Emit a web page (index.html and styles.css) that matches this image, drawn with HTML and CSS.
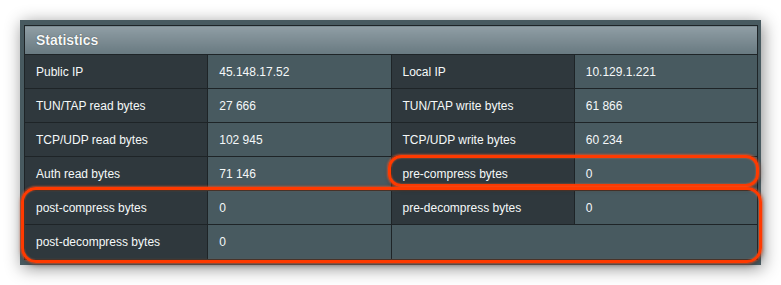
FILE: index.html
```html
<!DOCTYPE html>
<html lang="en">
<head>
    <meta charset="UTF-8">
    <title>Statistics</title>
    <link rel="stylesheet" href="styles.css">
</head>
<body>
    <div class="stage">
        <div class="panel">
            <table class="stats">
                <thead>
                    <tr>
                        <th colspan="4">Statistics</th>
                    </tr>
                </thead>
                <tbody>
                    <tr>
                        <td class="key">Public IP</td>
                        <td class="val">45.148.17.52</td>
                        <td class="key">Local IP</td>
                        <td class="val">10.129.1.221</td>
                    </tr>
                    <tr>
                        <td class="key">TUN/TAP read bytes</td>
                        <td class="val">27 666</td>
                        <td class="key">TUN/TAP write bytes</td>
                        <td class="val">61 866</td>
                    </tr>
                    <tr>
                        <td class="key">TCP/UDP read bytes</td>
                        <td class="val">102 945</td>
                        <td class="key">TCP/UDP write bytes</td>
                        <td class="val">60 234</td>
                    </tr>
                    <tr>
                        <td class="key">Auth read bytes</td>
                        <td class="val">71 146</td>
                        <td class="key">pre-compress bytes</td>
                        <td class="val">0</td>
                    </tr>
                    <tr>
                        <td class="key">post-compress bytes</td>
                        <td class="val">0</td>
                        <td class="key">pre-decompress bytes</td>
                        <td class="val">0</td>
                    </tr>
                    <tr>
                        <td class="key">post-decompress bytes</td>
                        <td class="val">0</td>
                        <td class="val" colspan="2"></td>
                    </tr>
                </tbody>
            </table>
        </div>

        <!-- highlight outlines -->
        <div class="mark mark-pre"></div>
        <div class="mark mark-post"></div>
    </div>
</body>
</html>
```

FILE: styles.css
```css
:root {
    --panel-bg: #485a60;
    --key-bg: #2f383d;
    --val-bg: #485a60;
    --grid-line: #1e2427;
    --text: #f5f8f9;
    --mark: #ff3a00;
}

body {
    margin: 0;
    padding: 20px;
    background: #ffffff;
    font-family: "Liberation Sans", Arial, sans-serif;
}

.stage {
    position: relative;
    width: 741px;
}

.panel {
    background: var(--panel-bg);
    padding: 5px 3px 5px 4px;
    box-shadow: 2px 3px 16px rgba(0, 0, 0, 0.45);
}

.stats {
    width: 734px;
    border-collapse: collapse;
    table-layout: fixed;
    border: 1px solid var(--grid-line);
    color: var(--text);
    font-size: 12px;
}

.stats th {
    height: 28px;
    padding: 0 0 0 11px;
    text-align: left;
    font-size: 14px;
    font-weight: bold;
    text-shadow: 0 0 1px rgba(0, 0, 0, 0.7);
    background: linear-gradient(to bottom, #909ea5, #687980);
    border-bottom: 1px solid var(--grid-line);
}

.stats td {
    height: 33px;
    padding: 0 0 0 11px;
    border: 1px solid var(--grid-line);
}

.stats tr:last-child td {
    height: 34px;
}

.key {
    background: var(--key-bg);
    width: 172px;
}

.val {
    background: var(--val-bg);
    width: 172px;
}

.mark {
    position: absolute;
    border: 3px solid var(--mark);
    border-radius: 13px;
    box-shadow: 0 0 2px 1px rgba(255, 90, 40, 0.6), inset 0 0 2px rgba(255, 120, 60, 0.7), 1px 2px 5px rgba(0, 0, 0, 0.35);
}

.mark-pre {
    left: 368px;
    top: 135px;
    width: 365px;
    height: 26px;
}

.mark-post {
    left: 1px;
    top: 167px;
    width: 735px;
    height: 70px;
    border-radius: 15px;
}
```
